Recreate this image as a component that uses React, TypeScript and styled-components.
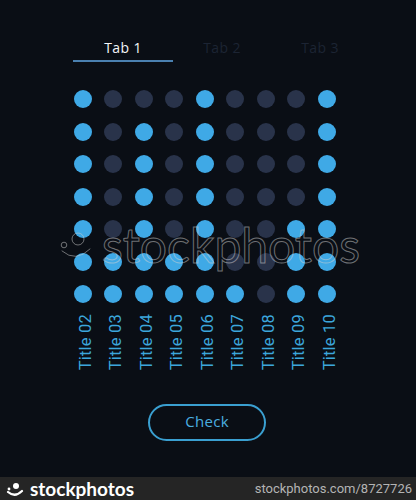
import React from "react";
import styled, { createGlobalStyle } from "styled-components";

const GlobalStyle = createGlobalStyle`
  html, body { margin: 0; padding: 0; background: #0a0e15; }
  body { width: 416px; height: 500px; overflow: hidden; }
`;

const Page = styled.div`
  position: relative;
  width: 416px;
  height: 500px;
  display: flex;
  flex-direction: column;
  background: #0a0e15;
`;

const Main = styled.main`
  flex: 1;
  display: flex;
  flex-direction: column;
  align-items: flex-start;
  padding-left: 73px;
`;

const Tabs = styled.div`
  display: flex;
  margin-top: 37px;
`;

const Tab = styled.div<{ $active?: boolean }>`
  width: ${(p) => (p.$active ? 100 : 98)}px;
  text-align: center;
  font-family: "Open Sans", sans-serif;
  font-size: 14px;
  font-weight: 500;
  letter-spacing: 0.4px;
  line-height: 22px;
  padding-bottom: 1px;
  color: ${(p) => (p.$active ? "#f4f6f9" : "#1c2433")};
  border-bottom: 2px solid ${(p) => (p.$active ? "#4a80b0" : "transparent")};
`;

const DotGrid = styled.div`
  display: grid;
  grid-template-columns: repeat(9, 18px);
  column-gap: 12.5px;
  row-gap: 14.5px;
  margin-top: 28px;
  margin-left: 0.5px;
`;

const Dot = styled.div<{ $on: boolean }>`
  width: 18px;
  height: 18px;
  border-radius: 50%;
  background: ${(p) => (p.$on ? "#3fa9e6" : "#29334a")};
`;

const LabelRow = styled.div`
  display: grid;
  grid-template-columns: repeat(9, 18px);
  column-gap: 12.5px;
  height: 57px;
  align-items: end;
  margin-top: 10px;
  margin-left: 0.5px;
`;

const Label = styled.div`
  writing-mode: vertical-rl;
  transform: rotate(180deg);
  font-family: Roboto, "Liberation Sans", sans-serif;
  font-size: 16.5px;
  line-height: 18px;
  letter-spacing: 0.2px;
  color: #3ca6dc;
  white-space: nowrap;
  justify-self: center;
  margin-left: 6px;
`;

const CheckButton = styled.button`
  margin-top: 34px;
  margin-left: 75px;
  width: 118px;
  height: 37px;
  padding: 0 0 3px;
  border: 2px solid #3a9fd0;
  border-radius: 19px;
  background: transparent;
  font-family: "Open Sans", sans-serif;
  font-size: 15px;
  font-weight: 500;
  letter-spacing: 0.3px;
  color: #4aaee0;
  cursor: pointer;
`;

const Footer = styled.footer`
  height: 23px;
  background: #252525;
  display: flex;
  align-items: center;
  justify-content: space-between;
  padding: 0 4px 0 5px;
`;

const Brand = styled.div`
  display: flex;
  align-items: center;
  gap: 5px;
  font-family: Lato, sans-serif;
  font-weight: 700;
  font-size: 19px;
  color: #ffffff;
  line-height: 1;
`;

const FooterUrl = styled.span`
  font-family: Roboto, sans-serif;
  font-size: 13px;
  color: #b4b4b4;
`;

const Watermark = styled.div`
  position: absolute;
  left: 56px;
  top: 221px;
  display: flex;
  align-items: center;
  gap: 6px;
  pointer-events: none;
  font-family: Lato, sans-serif;
  font-weight: 400;
  font-size: 48px;
  line-height: 1;
  color: transparent;
  -webkit-text-stroke: 1px rgba(210, 210, 210, 0.5);
`;

const pattern = [
  "100010001",
  "101010001",
  "101010001",
  "101010001",
  "101010011",
  "111110011",
  "111111011",
];

const titles = ["02", "03", "04", "05", "06", "07", "08", "09", "10"];

const Logo = ({ size = 20, outline = false }: { size?: number; outline?: boolean }) => (
  <svg width={size} height={size * 0.8} viewBox="0 0 20 16">
    <circle
      cx="11"
      cy="5"
      r="3"
      fill={outline ? "none" : "#fff"}
      stroke={outline ? "rgba(210,210,210,0.5)" : "none"}
      strokeWidth={outline ? 0.5 : 0}
    />
    <circle
      cx="4"
      cy="8"
      r="1.4"
      fill={outline ? "none" : "#fff"}
      stroke={outline ? "rgba(210,210,210,0.5)" : "none"}
      strokeWidth={outline ? 0.5 : 0}
    />
    <path
      d="M3 11 Q10 17 17 10"
      fill="none"
      stroke={outline ? "rgba(210,210,210,0.5)" : "#fff"}
      strokeWidth={outline ? 0.5 : 2.2}
      strokeLinecap="round"
    />
  </svg>
);

export default function App() {
  return (
    <>
      <GlobalStyle />
      <Page>
        <Main>
          <Tabs>
            <Tab $active>Tab 1</Tab>
            <Tab>Tab 2</Tab>
            <Tab>Tab 3</Tab>
          </Tabs>
          <DotGrid>
            {pattern.map((row, r) =>
              row.split("").map((c, i) => <Dot key={`${r}-${i}`} $on={c === "1"} />)
            )}
          </DotGrid>
          <LabelRow>
            {titles.map((t) => (
              <Label key={t}>Title {t}</Label>
            ))}
          </LabelRow>
          <CheckButton>Check</CheckButton>
        </Main>
        <Footer>
          <Brand>
            <Logo />
            stockphotos
          </Brand>
          <FooterUrl>stockphotos.com/8727726</FooterUrl>
        </Footer>
        <Watermark>
          <Logo size={40} outline />
          stockphotos
        </Watermark>
      </Page>
    </>
  );
}
